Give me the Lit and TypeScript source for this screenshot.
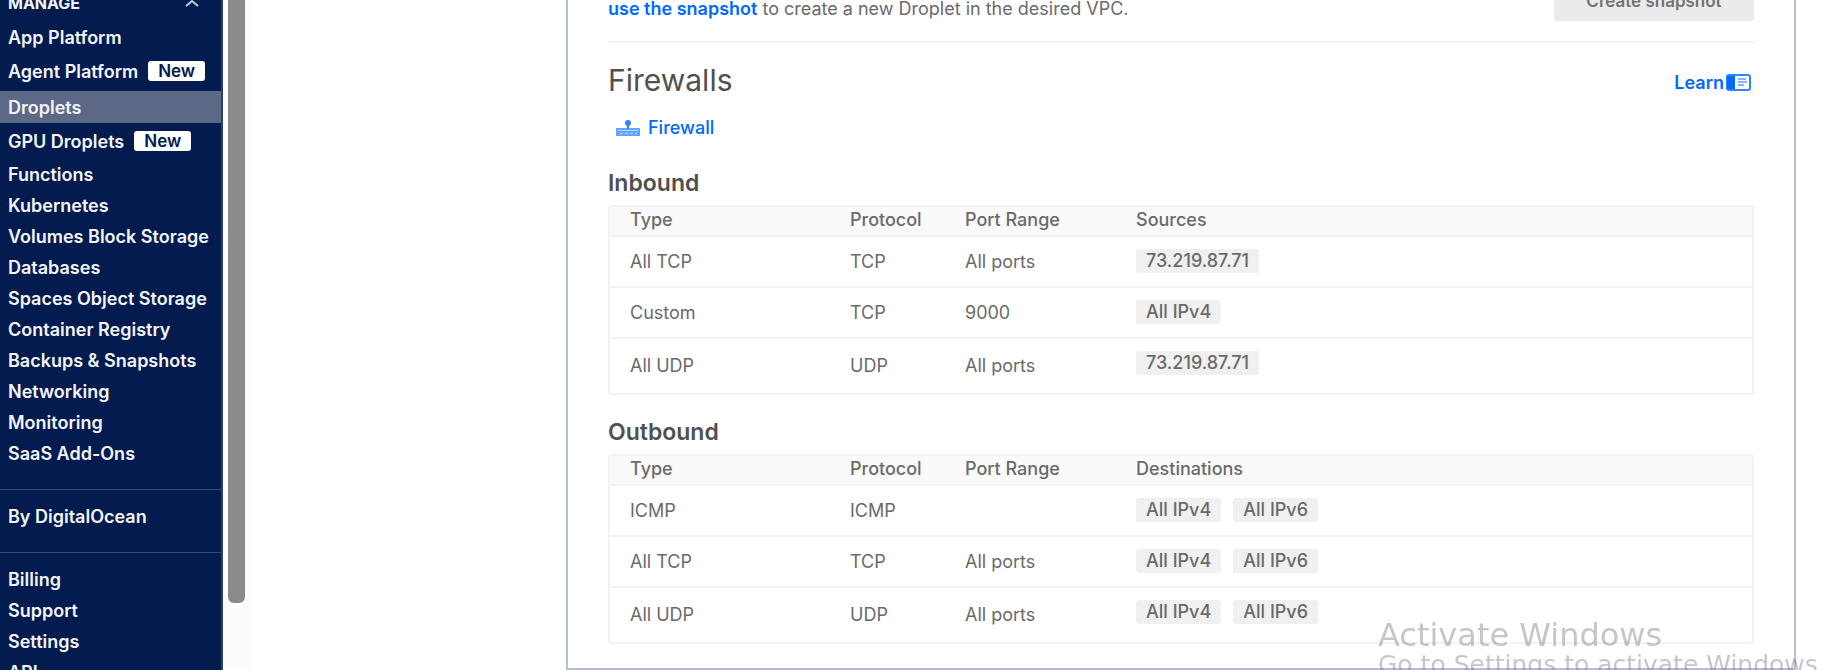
import { LitElement, html, css, svg, nothing } from "lit";
import { customElement, property } from "lit/decorators.js";

interface NavItem {
  label: string;
  isNew?: boolean;
  active?: boolean;
}

interface Rule {
  type: string;
  protocol: string;
  ports: string;
  peers: string[];
}

const MANAGE: NavItem[] = [
  { label: "App Platform" },
  { label: "Agent Platform", isNew: true },
  { label: "Droplets", active: true },
  { label: "GPU Droplets", isNew: true },
  { label: "Functions" },
  { label: "Kubernetes" },
  { label: "Volumes Block Storage" },
  { label: "Databases" },
  { label: "Spaces Object Storage" },
  { label: "Container Registry" },
  { label: "Backups & Snapshots" },
  { label: "Networking" },
  { label: "Monitoring" },
  { label: "SaaS Add-Ons" },
];

const ACCOUNT: NavItem[] = [
  { label: "Billing" },
  { label: "Support" },
  { label: "Settings" },
  { label: "API" },
];

const INBOUND: Rule[] = [
  { type: "All TCP", protocol: "TCP", ports: "All ports", peers: ["73.219.87.71"] },
  { type: "Custom", protocol: "TCP", ports: "9000", peers: ["All IPv4"] },
  { type: "All UDP", protocol: "UDP", ports: "All ports", peers: ["73.219.87.71"] },
];

const OUTBOUND: Rule[] = [
  { type: "ICMP", protocol: "ICMP", ports: "", peers: ["All IPv4", "All IPv6"] },
  { type: "All TCP", protocol: "TCP", ports: "All ports", peers: ["All IPv4", "All IPv6"] },
  { type: "All UDP", protocol: "UDP", ports: "All ports", peers: ["All IPv4", "All IPv6"] },
];

@customElement("side-nav")
export class SideNav extends LitElement {
  static styles = css`
    :host {
      display: block;
      box-sizing: border-box;
      width: 223px;
      flex: none;
      overflow: hidden;
      background: #031b4e;
      border-right: 2px solid #2c4070;
      font-weight: 600;
      font-size: 18px;
      color: #f3f5f9;
    }
    .section {
      display: flex;
      align-items: center;
      justify-content: space-between;
      width: 100%;
      height: 30px;
      margin: -12px 0 4px;
      padding: 0 22px 0 8px;
      border: 0;
      background: none;
      color: inherit;
      font: inherit;
      font-weight: 700;
      font-size: 16px;
    }
    .list {
      margin: 0;
      padding: 0;
      list-style: none;
    }
    .item {
      display: flex;
      align-items: center;
      gap: 10px;
      height: 31px;
      padding-left: 8px;
      color: inherit;
      text-decoration: none;
      white-space: nowrap;
    }
    .tagged {
      height: 36px;
    }
    .active {
      height: 32px;
      margin-top: 2px;
      background: #5c6885;
    }
    .badge {
      padding: 0 10px;
      border-radius: 3px;
      background: #fff;
      color: #031b4e;
      font-size: 17px;
      line-height: 20px;
    }
    .group {
      margin-top: 20px;
      padding: 11px 0 0;
      border-top: 1px solid #35486f;
    }
  `;

  private renderItem(item: NavItem) {
    const cls = `item ${item.isNew ? "tagged" : ""} ${item.active ? "active" : ""}`;
    return html`<li>
      <a class=${cls} href="#" aria-current=${item.active ? "page" : nothing}
        ><span>${item.label}</span>${item.isNew
          ? html`<span class="badge">New</span>`
          : nothing}</a
      >
    </li>`;
  }

  render() {
    return html`<nav>
      <button class="section" aria-expanded="true">
        MANAGE
        <svg width="14" height="8" viewBox="0 0 14 8" fill="none" stroke="#c3cad9" stroke-width="2">
          <path d="M1 7 7 2l6 5" />
        </svg>
      </button>
      <ul class="list">
        ${MANAGE.map((i) => this.renderItem(i))}
      </ul>
      <ul class="list group">
        ${this.renderItem({ label: "By DigitalOcean" })}
      </ul>
      <ul class="list group">
        ${ACCOUNT.map((i) => this.renderItem(i))}
      </ul>
    </nav>`;
  }
}

@customElement("rules-table")
export class RulesTable extends LitElement {
  @property() heading = "";
  @property() peerLabel = "";
  @property({ attribute: false }) rules: Rule[] = [];

  static styles = css`
    :host {
      display: block;
    }
    .title {
      margin: 0 0 10px;
      font-size: 23px;
      line-height: 24px;
      font-weight: 600;
      color: #505050;
    }
    .table {
      width: 100%;
      table-layout: fixed;
      border: 2px solid #f2f2f2;
      border-radius: 4px;
      border-spacing: 0;
      font-size: 18px;
      line-height: 20px;
      color: #6a6a6a;
    }
    .type {
      width: 220px;
    }
    .protocol {
      width: 115px;
    }
    .ports {
      width: 171px;
    }
    .head {
      height: 26px;
      padding: 0 0 2px;
      background: #fafafa;
      font-weight: 500;
      text-align: left;
    }
    .cell {
      height: 49px;
      padding: 0;
      border-top: 2px solid #f2f2f2;
    }
    .lead {
      padding-left: 20px;
    }
    .row:last-child .cell {
      height: 54px;
    }
    .peers {
      vertical-align: top;
    }
    .chips {
      display: flex;
      gap: 12px;
      padding-top: 12px;
    }
    .chip {
      padding: 0 10px;
      border-radius: 3px;
      background: #f0f0f0;
      line-height: 24px;
      font-weight: 500;
    }
  `;

  render() {
    return html`<h3 class="title" id="title">${this.heading}</h3>
      <table class="table" aria-labelledby="title">
        <thead>
          <tr>
            <th class="head type lead" scope="col">Type</th>
            <th class="head protocol" scope="col">Protocol</th>
            <th class="head ports" scope="col">Port Range</th>
            <th class="head" scope="col">${this.peerLabel}</th>
          </tr>
        </thead>
        <tbody>
          ${this.rules.map(
            (r) => html`<tr class="row">
              <td class="cell lead">${r.type}</td>
              <td class="cell">${r.protocol}</td>
              <td class="cell">${r.ports}</td>
              <td class="cell peers">
                <div class="chips">
                  ${r.peers.map((p) => html`<span class="chip">${p}</span>`)}
                </div>
              </td>
            </tr>`
          )}
        </tbody>
      </table>`;
  }
}

const firewallIcon = svg`
  <circle cx="12" cy="3" r="3" />
  <path d="M11 4h2v5h-2z" />
  <path d="M0 8h24v8H0z" opacity="0.75" />
  <path d="M2 10h20v1H2zM4 13h3v1H4zM9 13h3v1H9zM14 13h3v1h-3zM19 13h2v1h-2z" fill="#b5d5ff" />`;

const learnIcon = svg`
  <rect x="1" y="1" width="23" height="15" rx="2" fill="#fff" stroke="#2f85ff" stroke-width="2" />
  <path d="M1 2h8v13H1z" fill="#0069ff" />
  <path d="M12 5h8M12 8h9M12 11h6" stroke="#5c9fff" stroke-width="1.4" />`;

@customElement("app-root")
export class AppRoot extends LitElement {
  static styles = css`
    :host {
      display: flex;
      height: 100vh;
      overflow: hidden;
      background: #fff;
      font-family: Inter, "Liberation Sans", sans-serif;
    }
    .track {
      flex: none;
      width: 28px;
      background: #fcfcfc;
    }
    .thumb {
      width: 17px;
      height: 90vh;
      margin-left: 5px;
      border-radius: 0 0 6px 6px;
      background: #8b8b8b;
    }
    .page {
      flex: 1;
      min-width: 0;
      padding: 0 52px 0 315px;
    }
    .panel {
      box-sizing: border-box;
      border: solid #b4bdd3;
      border-width: 0 2px 2px;
      padding: 0 40px 24px;
    }
    .snapshot {
      display: flex;
      justify-content: space-between;
      align-items: flex-end;
      margin-top: -19px;
      padding-bottom: 20px;
      border-bottom: 2px solid #f2f2f2;
    }
    .note {
      margin: 0;
      font-size: 18px;
      line-height: 24px;
      color: #6a6a6a;
    }
    .link {
      color: #0069ff;
      font-weight: 600;
      text-decoration: none;
    }
    .create {
      width: 200px;
      height: 40px;
      border: 0;
      border-radius: 3px;
      background: #ebebeb;
      color: #737373;
      font: inherit;
      font-size: 17px;
      font-weight: 600;
    }
    .bar {
      display: flex;
      align-items: center;
      justify-content: space-between;
      padding: 21px 3px 0 0;
    }
    .heading {
      margin: 0;
      font-size: 30px;
      line-height: 32px;
      font-weight: 400;
      color: #505050;
    }
    .learn {
      display: flex;
      align-items: center;
      gap: 2px;
      padding-top: 4px;
      font-size: 18px;
    }
    .firewall {
      display: flex;
      width: fit-content;
      align-items: center;
      gap: 8px;
      margin: 20px 0 31px;
      padding-left: 8px;
      font-size: 18px;
      line-height: 24px;
      font-weight: 500;
    }
    .outbound {
      margin-top: 25px;
    }
    .watermark {
      position: fixed;
      right: 28px;
      bottom: -9px;
      width: 442px;
      white-space: nowrap;
      font-family: "DejaVu Sans", sans-serif;
      color: rgba(120, 120, 120, 0.42);
      pointer-events: none;
    }
    .wm-title {
      margin: 0;
      font-size: 32px;
      line-height: 32px;
    }
    .wm-text {
      margin: 0;
      font-size: 25px;
      line-height: 28px;
    }
  `;

  render() {
    return html`<side-nav></side-nav>
      <div class="track"><div class="thumb"></div></div>
      <main class="page">
        <section class="panel">
          <div class="snapshot">
            <p class="note">
              <a class="link" href="#">use the snapshot</a> to create a new Droplet in the desired
              VPC.
            </p>
            <button class="create">Create snapshot</button>
          </div>
          <div class="bar">
            <h2 class="heading">Firewalls</h2>
            <a class="link learn" href="#"
              >Learn<svg width="25" height="17" viewBox="0 0 25 17" fill="none">${learnIcon}</svg></a
            >
          </div>
          <a class="link firewall" href="#"
            ><svg width="24" height="16" viewBox="0 0 24 16" fill="#2f85ff">${firewallIcon}</svg
            >Firewall</a
          >
          <rules-table heading="Inbound" peerLabel="Sources" .rules=${INBOUND}></rules-table>
          <rules-table
            class="outbound"
            heading="Outbound"
            peerLabel="Destinations"
            .rules=${OUTBOUND}
          ></rules-table>
        </section>
      </main>
      <aside class="watermark">
        <p class="wm-title">Activate Windows</p>
        <p class="wm-text">Go to Settings to activate Windows.</p>
      </aside>`;
  }
}
